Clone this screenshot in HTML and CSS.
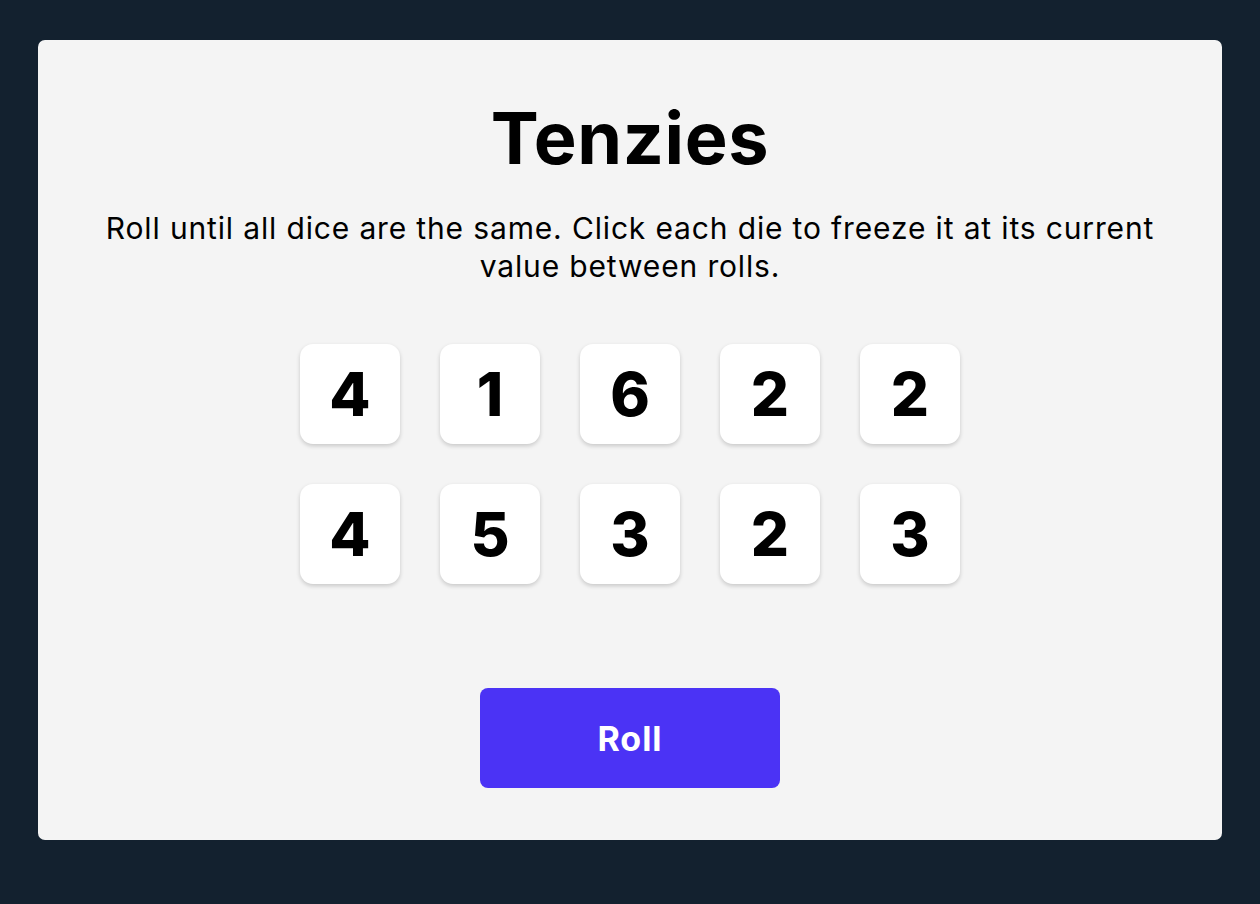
FILE: index.html
```html
<!DOCTYPE html>
<html lang="en">
<head>
<meta charset="utf-8">
<title>Tenzies</title>
<link rel="stylesheet" href="styles.css">
</head>
<body>
<main class="card">
  <h1 class="title">Tenzies</h1>
  <p class="instructions">Roll until all dice are the same. Click each die to freeze it at its current value between rolls.</p>
  <div class="dice">
    <button class="die">4</button>
    <button class="die">1</button>
    <button class="die">6</button>
    <button class="die">2</button>
    <button class="die">2</button>
    <button class="die">4</button>
    <button class="die">5</button>
    <button class="die">3</button>
    <button class="die">2</button>
    <button class="die">3</button>
  </div>
  <button class="roll">Roll</button>
</main>
</body>
</html>
```
FILE: styles.css
```css
html, body {
  margin: 0;
  padding: 0;
}
body {
  background: #13212f;
  font-family: Inter, "Noto Sans", sans-serif;
  padding: 40px 38px 64px;
}
.card {
  background: #f4f4f4;
  border-radius: 7px;
  height: 800px;
  box-sizing: border-box;
  display: flex;
  flex-direction: column;
  align-items: center;
  padding: 0 50px;
}
.title {
  margin: 55px 0 0;
  font-size: 72px;
  line-height: 86px;
  font-weight: 700;
  letter-spacing: 0.6px;
  color: #000;
}
.instructions {
  margin: 28px 0 0;
  font-size: 30px;
  line-height: 38px;
  letter-spacing: 0.85px;
  text-align: center;
  color: #000;
}
.dice {
  margin-top: 59px;
  display: grid;
  grid-template-columns: repeat(5, 100px);
  gap: 40px;
}
.die {
  width: 100px;
  height: 100px;
  border: none;
  border-radius: 13px;
  background: #fff;
  box-shadow: 0 2px 4px rgba(0, 0, 0, 0.18);
  font-family: Inter, sans-serif;
  font-size: 60px;
  font-weight: 800;
  color: #000;
  padding: 0;
  display: flex;
  align-items: center;
  justify-content: center;
}
.roll {
  margin-top: 104px;
  width: 300px;
  height: 100px;
  border: none;
  border-radius: 8px;
  background: #4b33f5;
  color: #fff;
  font-family: Inter, sans-serif;
  font-size: 34px;
  font-weight: 700;
  letter-spacing: 1px;
  padding: 0;
}
```
